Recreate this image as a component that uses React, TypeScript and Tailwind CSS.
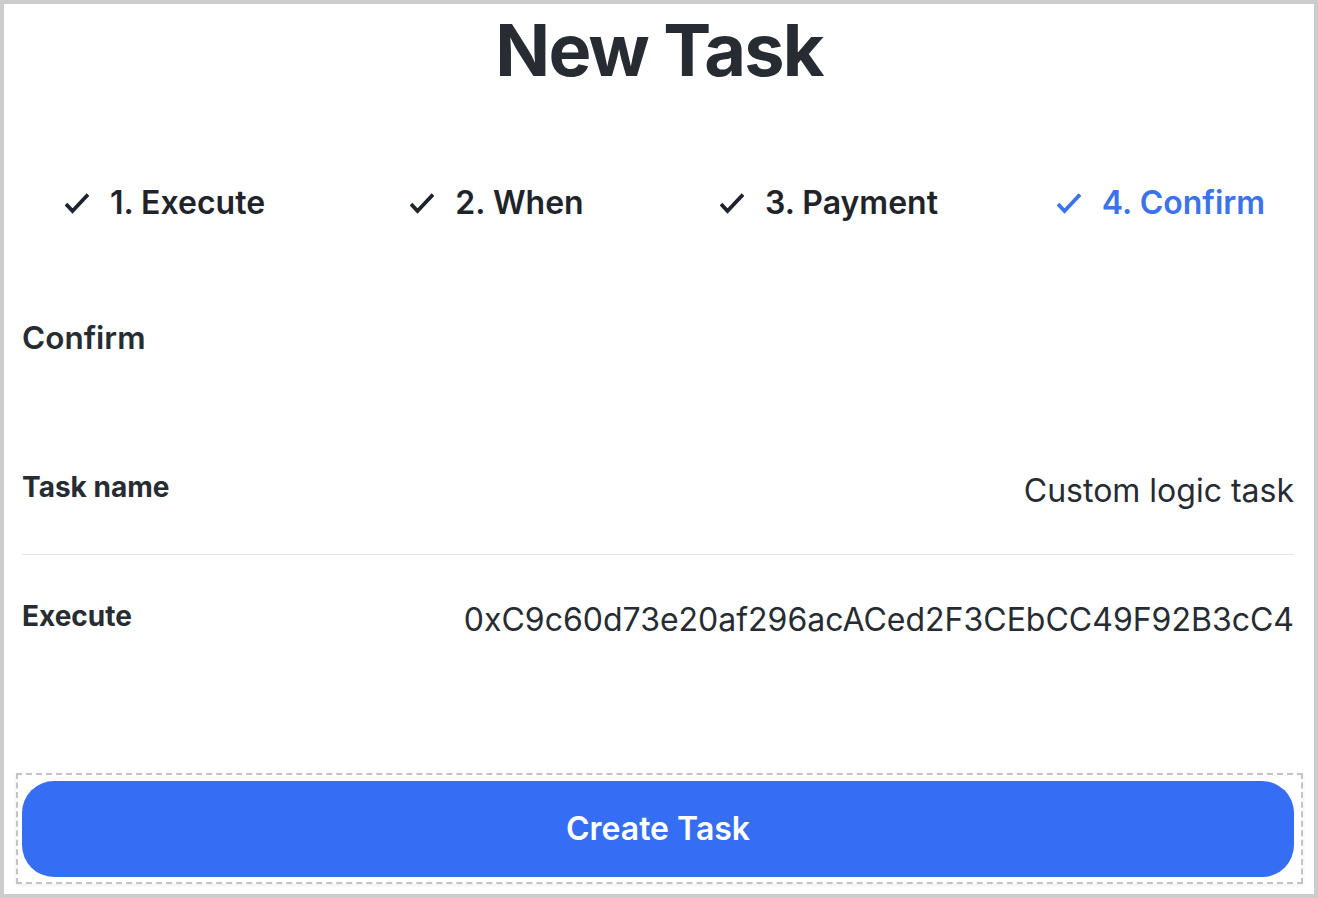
import React from 'react';

const steps = [
  { label: '1. Execute', active: false },
  { label: '2. When', active: false },
  { label: '3. Payment', active: false },
  { label: '4. Confirm', active: true },
];

const rows = [
  { label: 'Task name', value: 'Custom logic task', h: 'h-[131px] border-b border-[#e6e6ea]' },
  { label: 'Execute', value: '0xC9c60d73e20af296acACed2F3CEbCC49F92B3cC4', h: 'h-[126px]' },
];

function CheckMark({ className }: { className?: string }) {
  return (
    <svg viewBox="0 0 24 21" className={className} fill="none" stroke="currentColor" strokeWidth="3.8" strokeLinecap="butt" strokeLinejoin="miter">
      <path d="M1 11 7.5 18 23 1.5" />
    </svg>
  );
}

export default function App() {
  return (
    <div className="w-[1318px] h-[898px] border-4 border-[#cccccc] bg-white overflow-hidden text-[#272c33] font-['Inter',sans-serif]">
      {/* Header */}
      <div className="h-[92px] flex items-center justify-center">
        <h1 className="text-[72px] leading-none font-bold tracking-tight">New Task</h1>
      </div>

      {/* Steps */}
      <div className="h-[214px] -ml-[5px] grid grid-cols-[repeat(4,332px)] items-center">
        {steps.map(s => (
          <div key={s.label} className={`flex items-center justify-center gap-[21px] ${s.active ? 'text-[#3b73ea]' : 'text-[#1f242b]'}`}>
            <CheckMark className="w-[24px] h-[21px]" />
            <span className="text-[32px] font-semibold leading-9">{s.label}</span>
          </div>
        ))}
      </div>

      <div className="pl-[18px] pr-[20px]">
        <h2 className="h-[56px] flex items-center text-[31.5px] font-semibold">Confirm</h2>

        <div className="mt-[58px]">
          {rows.map(r => (
            <div key={r.label} className={`flex items-center justify-between ${r.h}`}>
              <span className="text-[28px] font-bold pb-[4px]">{r.label}</span>
              <span className="text-[32px] pt-[4px]">{r.value}</span>
            </div>
          ))}
        </div>
      </div>

      {/* Action */}
      <div className="mt-[92px] ml-[12px] w-[1287px] border-2 border-dashed border-[#c4c4c4] pl-[4px] pr-[7px] pt-[6px] pb-[5px] shadow-[0_1px_4px_rgba(0,0,0,0.08)]">
        <button className="w-full h-[96px] rounded-[32px] bg-[#356ef3] text-white text-[32px] font-semibold">
          Create Task
        </button>
      </div>
    </div>
  );
}
